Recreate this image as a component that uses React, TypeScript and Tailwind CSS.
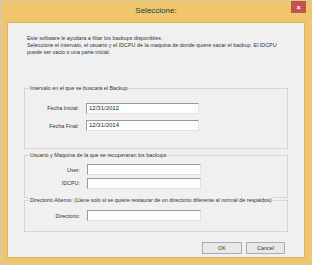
import React from "react";

function Input({ value, w }: { value?: string; w: number }) {
  return (
    <div
      className="h-[11px] bg-white border border-t-[#9a9a9a] border-l-[#9a9a9a] border-r-[#e3e3e3] border-b-[#e3e3e3] text-[6px] leading-[9px] pl-[2px] text-[#222]"
      style={{ width: w }}
    >
      {value}
    </div>
  );
}

function Group({ title, h, children }: { title: string; h: number; children?: React.ReactNode }) {
  return (
    <div className="relative ml-[16px] w-[264px] border border-[#d5d5d5]" style={{ height: h }}>
      <div className="absolute left-[4px] -top-[4px] bg-[#f0f0f0] px-[1px] leading-[7px]">{title}</div>
      {children}
    </div>
  );
}

export default function App() {
  return (
    <div
      className="w-[312px] h-[265px] bg-[#efc66c] border border-[#d9c9a0] flex flex-col text-[#333]"
      style={{ fontFamily: '"Liberation Sans", Arial, sans-serif' }}
    >
      <div className="relative h-[21px] flex items-center justify-center">
        <span className="text-[8px] text-[#333] mt-[-1px]">Seleccione:</span>
        <div className="absolute right-[5px] top-0 w-[15px] h-[12px] bg-[#c75050] flex items-center justify-center text-white text-[7px] font-bold leading-none">
          ×
        </div>
      </div>
      <div className="mx-[6px] mb-[6px] flex-1 bg-[#f0f0f0] border border-[#d4b46a] flex flex-col text-[5.4px] leading-[7px]">
        <div className="ml-[19px] mt-[12px]">
          <div>Este software le ayudara a filtar los backups disponibles.</div>
          <div>Seleccione el intervalo, el usuario y el IDCPU de la maquina de donde quiere sacar el backup. El IDCPU</div>
          <div>puede ser vacio o una parte inicial.</div>
        </div>

        <div className="mt-[32px]">
          <Group title="Intervalo en el que se buscara el Backup" h={61}>
            <div className="flex flex-col gap-[6px] mt-[14px]">
              <div className="flex items-center">
                <div className="w-[55px] text-right pr-[1px]">Fecha Inicial:</div>
                <div className="ml-[6px]"><Input value="12/31/2012" w={113} /></div>
              </div>
              <div className="flex items-center">
                <div className="w-[55px] text-right pr-[1px] mt-[2px]">Fecha Final:</div>
                <div className="ml-[6px]"><Input value="12/31/2014" w={113} /></div>
              </div>
            </div>
          </Group>
        </div>

        <div className="mt-[6px]">
          <Group title="Usuario y Maquina de la que se recuperaran los backups" h={43}>
            <div className="flex flex-col gap-[3px] mt-[8px]">
              <div className="flex items-center">
                <div className="w-[56px] text-right pr-[1px] mt-[2px]">User:</div>
                <div className="ml-[6px]"><Input w={114} /></div>
              </div>
              <div className="flex items-center">
                <div className="w-[56px] text-right pr-[1px]">IDCPU:</div>
                <div className="ml-[6px]"><Input w={114} /></div>
              </div>
            </div>
          </Group>
        </div>

        <div className="mt-[2px]">
          <Group title="Directorio Alterno: (Llene solo si se quiere restaurar de un directorio diferente al normal de respaldos)" h={32}>
            <div className="flex items-center mt-[9px]">
              <div className="w-[56px] text-right pr-[1px] mt-[1px]">Directorio:</div>
              <div className="ml-[6px]"><Input w={114} /></div>
            </div>
          </Group>
        </div>

        <div className="flex justify-end gap-[4px] mr-[19px] mt-[10px]">
          <div className="w-[40px] h-[12px] bg-[#e8e8e8] border border-[#adadad] flex items-center justify-center">OK</div>
          <div className="w-[39px] h-[12px] bg-[#e8e8e8] border border-[#adadad] flex items-center justify-center">Cancel</div>
        </div>
      </div>
    </div>
  );
}
